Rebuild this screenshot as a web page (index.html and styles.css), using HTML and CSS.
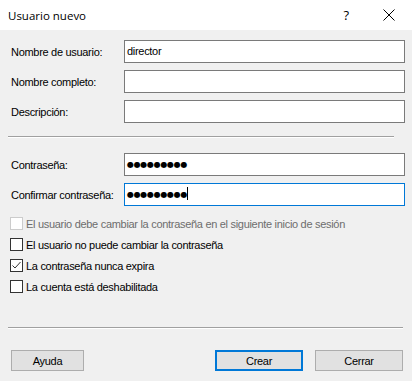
FILE: index.html
```html
<!DOCTYPE html>
<html>
<head>
<meta charset="utf-8">
<link rel="stylesheet" href="styles.css">
</head>
<body>
<div class="dialog">
  <div class="titlebar">
    <span class="title">Usuario nuevo</span>
    <span class="help">?</span>
    <svg class="close" width="12" height="12" viewBox="0 0 12 12"><path d="M0.5 0.5L11.5 11.5M11.5 0.5L0.5 11.5" stroke="#000" stroke-width="1" fill="none"/></svg>
  </div>
  <div class="body">
    <div class="form top">
      <label class="lbl">Nombre de usuario:</label>
      <div class="field">director</div>
      <label class="lbl">Nombre completo:</label>
      <div class="field"></div>
      <label class="lbl">Descripción:</label>
      <div class="field"></div>
    </div>
    <div class="sep sep1"></div>
    <div class="form pw">
      <label class="lbl">Contraseña:</label>
      <div class="field dots">●●●●●●●●●</div>
      <label class="lbl">Confirmar contraseña:</label>
      <div class="field dots focus">●●●●●●●●●<span class="caret"></span></div>
    </div>
    <div class="checks">
      <div class="check disabled"><span class="box"></span>El usuario debe cambiar la contraseña en el siguiente inicio de sesión</div>
      <div class="check"><span class="box"></span>El usuario no puede cambiar la contraseña</div>
      <div class="check"><span class="box"><svg width="11" height="11" viewBox="0 0 11 11"><path d="M1.5 5.5L4 8L9.5 2" stroke="#333" stroke-width="1" fill="none"/></svg></span>La contraseña nunca expira</div>
      <div class="check"><span class="box"></span>La cuenta está deshabilitada</div>
    </div>
    <div class="sep sep2"></div>
    <div class="buttons">
      <div class="btn">Ayuda</div>
      <div class="spacer"></div>
      <div class="btn default">Crear</div>
      <div class="btn">Cerrar</div>
    </div>
  </div>
</div>
</body>
</html>
```
FILE: styles.css
```css
html, body {
  margin: 0;
  padding: 0;
  background: #f0f0f0;
}
body {
  width: 412px;
  height: 381px;
  overflow: hidden;
  font-family: "Liberation Sans", Arial, sans-serif;
  font-size: 11px;
  letter-spacing: -0.3px;
  color: #000;
}
.titlebar {
  height: 30px;
  background: #fff;
  display: flex;
  align-items: center;
  padding-left: 8px;
  letter-spacing: 0;
}
.title {
  font-family: "Open Sans", "Noto Sans", sans-serif;
  font-size: 11.5px;
  flex: 1;
}
.help {
  font-family: "Open Sans", sans-serif;
  font-size: 13px;
  margin-right: 34px;
}
.close {
  margin-right: 17px;
}
.body {
  padding: 10px 7px 0 11px;
}
.form {
  display: grid;
  grid-template-columns: 113px 281px;
  align-items: center;
}
.form.top {
  row-gap: 7px;
}
.form.pw {
  row-gap: 7px;
  margin-top: 15px;
}
.lbl {
  white-space: nowrap;
}
.field {
  box-sizing: border-box;
  height: 23px;
  background: #fff;
  border: 1px solid #7a7a7a;
  padding: 3px 3px 0 2px;
  line-height: 14px;
}
.field.focus {
  border-color: #0078d7;
}
.dots {
  font-size: 8px;
  letter-spacing: -0.3px;
  line-height: 16px;
  font-family: "DejaVu Sans", sans-serif;
}
.caret {
  display: inline-block;
  width: 1px;
  height: 13px;
  background: #000;
  vertical-align: -3px;
}
.sep {
  height: 1px;
  background: #a0a0a0;
  border-bottom: 1px solid #fff;
  margin-left: -3px;
}
.sep1 {
  margin-top: 13px;
  width: 386px;
}
.sep2 {
  margin-top: 34px;
  width: 395px;
}
.checks {
  margin-top: 11px;
  margin-left: -1px;
  display: flex;
  flex-direction: column;
  gap: 8px;
}
.check {
  display: flex;
  align-items: center;
  height: 13px;
  white-space: nowrap;
}
.box {
  box-sizing: border-box;
  width: 13px;
  height: 13px;
  border: 1px solid #333;
  background: #fff;
  margin-right: 3px;
  display: flex;
  align-items: center;
  justify-content: center;
}
.disabled {
  color: #6d6d6d;
}
.disabled .box {
  border-color: #cccccc;
}
.buttons {
  display: flex;
  margin-top: 21px;
  margin-right: 2px;
}
.spacer {
  flex: 1;
}
.btn {
  box-sizing: border-box;
  width: 73px;
  height: 21px;
  background: #e1e1e1;
  border: 1px solid #adadad;
  display: flex;
  align-items: center;
  justify-content: center;
}
.btn.default {
  width: 88px;
  border: 2px solid #0078d7;
  margin-right: 12px;
}
.btn:last-child {
  width: 88px;
}
```
